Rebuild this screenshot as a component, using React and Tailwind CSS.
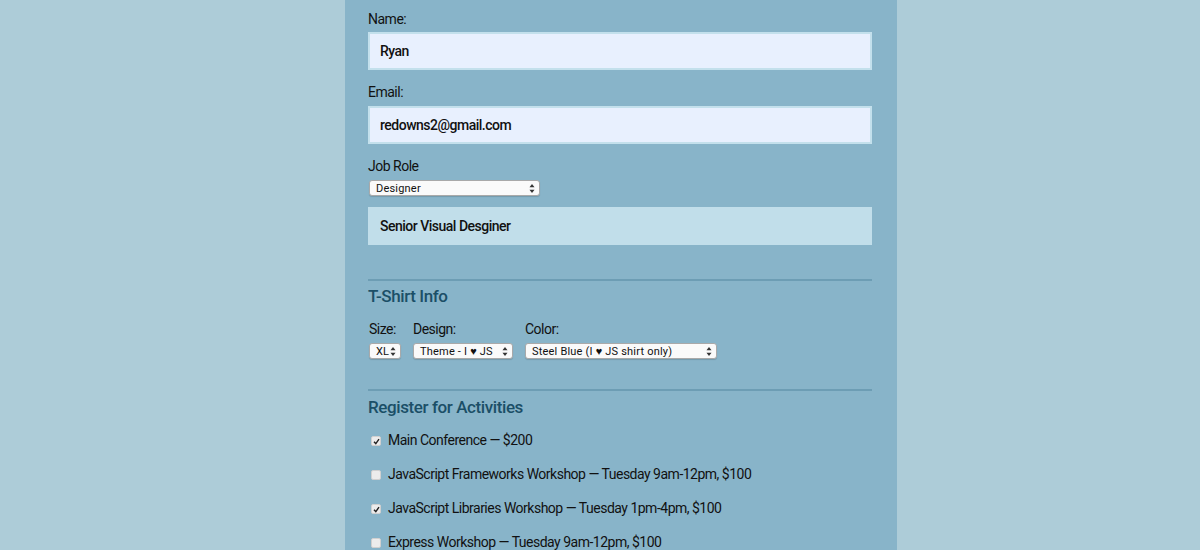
import React from "react";

function Arrows() {
  return (
    <svg width="6" height="9" viewBox="0 0 6 9" className="shrink-0">
      <path d="M3 0 L5.5 3.3 H0.5 Z" fill="#333" />
      <path d="M3 9 L5.5 5.7 H0.5 Z" fill="#333" />
    </svg>
  );
}

function FakeSelect({ value, width }) {
  return (
    <div
      className={`flex h-[16px] items-center justify-between rounded-[3px] border border-[#a9a9a9] bg-[#fafafa] pl-[6px] pr-[4px] text-[11px] leading-none tracking-[0.2px] text-[#111] shadow-[0_1px_1px_rgba(0,0,0,0.15)] ${width}`}
    >
      <span>{value}</span>
      <Arrows />
    </div>
  );
}

function Check({ checked }) {
  return (
    <div className="flex h-[10px] w-[10px] items-center justify-center rounded-[2px] border border-[#d0d0d0] bg-[#ececec]">
      {checked && (
        <svg width="7" height="7" viewBox="0 0 7 7">
          <path d="M1 3.8 L2.8 5.6 L6 1.2" stroke="#222" strokeWidth="1.4" fill="none" />
        </svg>
      )}
    </div>
  );
}

const activities = [
  { label: "Main Conference — $200", checked: true },
  { label: "JavaScript Frameworks Workshop — Tuesday 9am-12pm, $100", checked: false },
  { label: "JavaScript Libraries Workshop — Tuesday 1pm-4pm, $100", checked: true },
  { label: "Express Workshop — Tuesday 9am-12pm, $100", checked: false },
];

export default function App() {
  return (
    <div
      className="flex h-[550px] w-full overflow-hidden bg-[#adccd8] text-[#111]"
      style={{ fontFamily: "Roboto, 'Liberation Sans', sans-serif" }}
    >
      <div className="ml-[345px] w-[552px] bg-[#88b4c9] pl-[23px] pr-[25px] pt-[9px] tracking-[-0.5px]">
        {/* Basic info */}
        <div className="text-[14px] leading-[20px]">Name:</div>
        <div className="mt-[3px] flex h-[38px] items-center border-2 border-[#c3e0ec] bg-[#e8f0fe] px-[10px] text-[14px] font-medium">
          Ryan
        </div>
        <div className="mt-[12px] text-[14px] leading-[20px]">Email:</div>
        <div className="mt-[4px] flex h-[38px] items-center border-2 border-[#c3e0ec] bg-[#e8f0fe] px-[10px] text-[14px] font-medium">
          redowns2@gmail.com
        </div>
        <div className="mt-[12px] text-[14px] leading-[20px]">Job Role</div>
        <div className="mt-[4px] pl-[1px]">
          <FakeSelect value="Designer" width="w-[171px]" />
        </div>
        <div className="mt-[11px] flex h-[38px] items-center bg-[#c1deea] px-[12px] text-[14px] font-medium">
          Senior Visual Desginer
        </div>

        {/* T-Shirt */}
        <div className="mt-[34px] h-[2px] bg-[#6d9db4]" />
        <h2 className="mt-[3px] text-[17px] font-medium leading-[24px] tracking-[-0.4px] text-[#1b4f67]">T-Shirt Info</h2>
        <div className="mt-[11px] flex gap-[12px] pl-[1px] text-[14px] leading-[20px]">
          <div>
            <div>Size:</div>
            <div className="mt-[4px]">
              <FakeSelect value="XL" width="w-[32px]" />
            </div>
          </div>
          <div>
            <div>Design:</div>
            <div className="mt-[4px]">
              <FakeSelect value="Theme - I ♥ JS" width="w-[100px]" />
            </div>
          </div>
          <div>
            <div>Color:</div>
            <div className="mt-[4px]">
              <FakeSelect value="Steel Blue (I ♥ JS shirt only)" width="w-[192px]" />
            </div>
          </div>
        </div>

        {/* Activities */}
        <div className="mt-[30px] h-[2px] bg-[#6d9db4]" />
        <h2 className="mt-[4px] text-[17px] font-medium leading-[24px] tracking-[-0.4px] text-[#1b4f67]">Register for Activities</h2>
        <div className="mt-[11px] flex flex-col gap-[14px]">
          {activities.map((a) => (
            <div key={a.label} className="flex h-[20px] items-center text-[14px]">
              <div className="ml-[3px] mr-[7px] mt-[2px]">
                <Check checked={a.checked} />
              </div>
              <span>{a.label}</span>
            </div>
          ))}
        </div>
      </div>
    </div>
  );
}
